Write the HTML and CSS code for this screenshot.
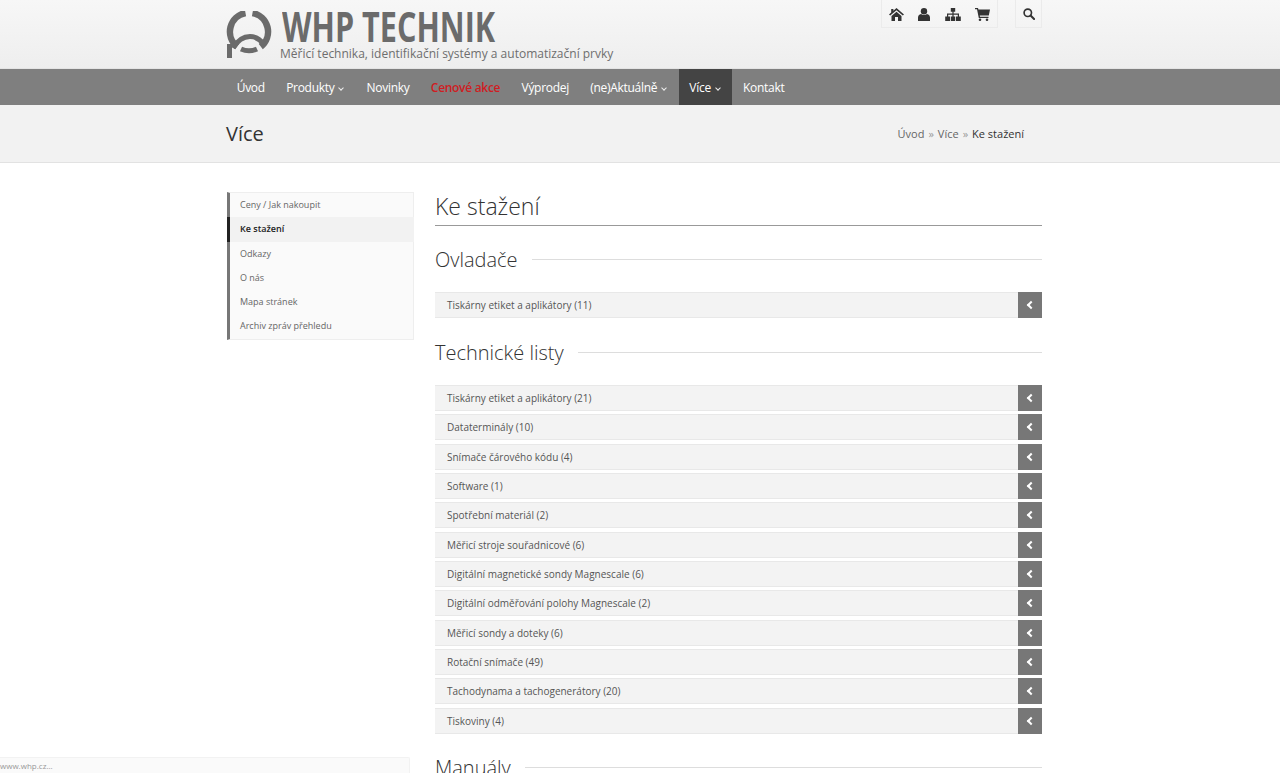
FILE: index.html
```html
<!DOCTYPE html>
<html>
<head>
  <meta charset="UTF-8" />
  <title>Ke stažení - WHP Technik</title>
  <link rel="stylesheet" href="styles.css">
</head>
<body>
  <!-- Header -->
  <header class="top">
    <div class="wrap top-inner">
      <a class="brand" href="#">
        <svg class="logo" viewBox="0 0 46 48" width="46" height="48" fill="none" stroke="#6b6b6b">
          <path d="M19.5 2 A19 19 0 0 0 11.2 35.6" stroke-width="6.5"/>
          <path d="M26.5 2 A19 19 0 0 1 34.8 35.6" stroke-width="6.5"/>
          <path d="M15 38 A19 19 0 0 0 31 38" stroke-width="5"/>
          <path d="M3.5 47 V33" stroke-width="5"/>
          <path d="M7 37 Q14 25.5 24 25.5 Q32 25.5 37.5 33" stroke-width="5"/>
        </svg>
        <span class="brand-text">
          <span class="brand-name">WHP TECHNIK</span>
          <span class="brand-sub">Měřicí technika, identifikační systémy a automatizační prvky</span>
        </span>
      </a>
      <div class="tools">
        <div class="tool-box">
          <a href="#"><svg width="15" height="13" viewBox="0 0 15 13"><path d="M7.5 0 L15 6.5 L13.8 7.6 L7.5 2.3 L1.2 7.6 L0 6.5 L2.2 4.6 V1 H4.4 V2.7 Z M2.5 8 L7.5 3.8 L12.5 8 V13 H9 V9 H6 V13 H2.5 Z" fill="#333"/></svg></a>
          <a href="#"><svg width="12" height="13" viewBox="0 0 12 13"><circle cx="6" cy="3.2" r="3.2" fill="#333"/><path d="M0 13 V9.5 C0 7.5 1.5 6.3 3 6 C4.5 7.2 7.5 7.2 9 6 C10.5 6.3 12 7.5 12 9.5 V13 Z" fill="#333"/></svg></a>
          <a href="#"><svg width="16" height="13" viewBox="0 0 16 13"><path d="M5.8 0 H10.2 V3.8 H8.6 V5.6 H14 V8.6 H15.8 V13 H11 V8.6 H12.8 V6.8 H8.6 V8.6 H10.2 V13 H5.8 V8.6 H7.4 V6.8 H3.2 V8.6 H5 V13 H0.2 V8.6 H2 V5.6 H7.4 V3.8 H5.8 Z" fill="#333"/></svg></a>
          <a href="#"><svg width="15" height="13" viewBox="0 0 15 13"><path d="M0 0 H3 L3.4 1.6 H15 L13.8 7.6 H4.8 L5 8.8 H13.5 V10 H3.8 L2 1.2 H0 Z" fill="#333"/><circle cx="5" cy="11.7" r="1.3" fill="#333"/><circle cx="12" cy="11.7" r="1.3" fill="#333"/></svg></a>
        </div>
        <div class="tool-box tool-search">
          <a href="#"><svg width="12" height="12" viewBox="0 0 13 13"><circle cx="5.2" cy="5.2" r="4" fill="none" stroke="#333" stroke-width="1.8"/><path d="M8.2 8.2 L12 12" stroke="#333" stroke-width="2.2" stroke-linecap="round"/></svg></a>
        </div>
      </div>
    </div>
  </header>

  <!-- Main menu -->
  <nav class="menu">
    <ul class="wrap menu-list">
      <li><a href="#">Úvod</a></li>
      <li><a href="#">Produkty <i class="caret"></i></a></li>
      <li><a href="#">Novinky</a></li>
      <li><a class="sale" href="#">Cenové akce</a></li>
      <li><a href="#">Výprodej</a></li>
      <li><a href="#">(ne)Aktuálně <i class="caret"></i></a></li>
      <li class="active"><a href="#">Více <i class="caret"></i></a></li>
      <li><a href="#">Kontakt</a></li>
    </ul>
  </nav>

  <div class="title-bar">
    <div class="wrap title-inner">
      <h2>Více</h2>
      <div class="crumbs">
        <a href="#">Úvod</a><span class="sep">»</span><a href="#">Více</a><span class="sep">»</span><span class="here">Ke stažení</span>
      </div>
    </div>
  </div>

  <div class="wrap main">
    <!-- Side menu -->
    <ul class="side">
      <li><a href="#">Ceny / Jak nakoupit</a></li>
      <li class="current"><a href="#">Ke stažení</a></li>
      <li><a href="#">Odkazy</a></li>
      <li><a href="#">O nás</a></li>
      <li><a href="#">Mapa stránek</a></li>
      <li><a href="#">Archiv zpráv přehledu</a></li>
    </ul>

    <section class="content">
      <h1>Ke stažení</h1>

      <h3 class="sec sec-first"><span>Ovladače</span></h3>
      <div class="rows">
        <div class="row"><span>Tiskárny etiket a aplikátory (11)</span><button class="toggle"></button></div>
      </div>

      <h3 class="sec"><span>Technické listy</span></h3>
      <div class="rows">
        <div class="row"><span>Tiskárny etiket a aplikátory (21)</span><button class="toggle"></button></div>
        <div class="row"><span>Dataterminály (10)</span><button class="toggle"></button></div>
        <div class="row"><span>Snímače čárového kódu (4)</span><button class="toggle"></button></div>
        <div class="row"><span>Software (1)</span><button class="toggle"></button></div>
        <div class="row"><span>Spotřební materiál (2)</span><button class="toggle"></button></div>
        <div class="row"><span>Měřicí stroje souřadnicové (6)</span><button class="toggle"></button></div>
        <div class="row"><span>Digitální magnetické sondy Magnescale (6)</span><button class="toggle"></button></div>
        <div class="row"><span>Digitální odměřování polohy Magnescale (2)</span><button class="toggle"></button></div>
        <div class="row"><span>Měřicí sondy a doteky (6)</span><button class="toggle"></button></div>
        <div class="row"><span>Rotační snímače (49)</span><button class="toggle"></button></div>
        <div class="row"><span>Tachodynama a tachogenerátory (20)</span><button class="toggle"></button></div>
        <div class="row"><span>Tiskoviny (4)</span><button class="toggle"></button></div>
      </div>

      <h3 class="sec"><span>Manuály</span></h3>
    </section>
  </div>

  <div class="status">www.whp.cz...</div>
</body>
</html>
```
FILE: styles.css
```css
html,
body {
  height: 100%;
  overflow: hidden;
}

body {
  margin: 0;
  font-family: 'Open Sans', sans-serif;
  font-size: 10px;
  color: #555;
  background-color: #fff;
}

a {
  color: inherit;
  text-decoration: none;
}

.wrap {
  width: 816px;
  margin-left: 226px;
}

/* Header */
.top {
  height: 68px;
  background: linear-gradient(#f7f7f7, #eeeeee);
  border-bottom: 1px solid #e4e4e4;
}

.top-inner {
  display: flex;
  justify-content: space-between;
  align-items: flex-start;
}

.brand {
  display: flex;
  padding-top: 11px;
}

.logo {
  display: block;
}

.brand-text {
  display: flex;
  flex-direction: column;
  margin-left: 8px;
}

.brand-name {
  font-size: 40.5px;
  font-weight: 700;
  line-height: 31px;
  color: #6b6b6b;
  margin-left: 2px;
  white-space: nowrap;
  transform: scaleX(0.755);
  transform-origin: left top;
}

.brand-sub {
  font-size: 12px;
  line-height: 16px;
  margin-top: 4px;
  color: #6e6e6e;
  white-space: nowrap;
}

.tools {
  display: flex;
  gap: 17px;
}

.tool-box {
  display: flex;
  align-items: center;
  height: 26px;
  padding: 1px 7px 0;
  gap: 14.3px;
  border: 1px solid #ebebeb;
  border-top: none;
}

.tool-search {
  padding: 1px 6px 0 7px;
}

.tool-box a {
  display: flex;
}

/* Main menu */
.menu {
  height: 36px;
  background-color: #7f7f7f;
}

.menu-list {
  display: flex;
  list-style-type: none;
  padding: 0;
  margin-top: 0;
  margin-bottom: 0;
}

.menu-list a {
  display: block;
  padding: 1px 10.7px 0;
  line-height: 35px;
  font-size: 12px;
  font-weight: 500;
  letter-spacing: -0.3px;
  color: #fff;
  white-space: nowrap;
}

.menu-list .sale {
  color: #d01c22;
  font-weight: 600;
}

.menu-list .active {
  background-color: #444;
}

.caret {
  display: inline-block;
  width: 3px;
  height: 3px;
  margin: 0 2px 2px 2px;
  border-right: 1px solid #eee;
  border-bottom: 1px solid #eee;
  transform: rotate(45deg);
}

/* Title bar */
.title-bar {
  height: 57px;
  background-color: #f2f2f2;
  border-bottom: 1px solid #e2e2e2;
}

.title-inner {
  display: flex;
  justify-content: space-between;
  align-items: center;
  height: 57px;
}

.title-inner h2 {
  margin: 0;
  font-size: 20px;
  font-weight: 400;
  color: #333;
}

.crumbs {
  font-size: 11px;
  color: #666;
  padding-right: 18px;
}

.crumbs .sep {
  margin: 0 4px;
  color: #999;
}

.crumbs .here {
  color: #333;
}

/* Page body */
.main {
  display: flex;
  align-items: flex-start;
  padding-top: 29px;
}

.side {
  width: 187px;
  margin: 0 21px 0 1px;
  padding: 0;
  list-style-type: none;
  background-color: #fafafa;
  border: 1px solid #eee;
  border-left: 3px solid #777;
  box-sizing: border-box;
}

.side li {
  height: 24.3px;
  line-height: 24px;
  padding-left: 10px;
  margin-right: -1px;
  color: #666;
  font-size: 9px;
}

.side .current {
  margin-left: -3px;
  padding-left: 10px;
  background-color: #f2f2f2;
  border-left: 3px solid #222;
  color: #222;
  font-weight: 600;
}

.content {
  flex: 1;
  min-width: 0;
}

.content h1 {
  margin: 0;
  height: 33px;
  font-size: 23px;
  font-weight: 300;
  line-height: 28px;
  color: #333;
  border-bottom: 1px solid #999;
}

.sec {
  display: flex;
  align-items: center;
  margin: 18px 0 17px;
  height: 32px;
  font-size: 20px;
  font-weight: 300;
  color: #333;
}

.sec-first {
  margin-top: 17px;
}

.sec::after {
  content: "";
  flex: 1;
  margin-left: 14px;
  border-top: 1px solid #ddd;
}

.rows {
  display: flex;
  flex-direction: column;
  gap: 3.33px;
}

.row {
  display: flex;
  justify-content: space-between;
  align-items: center;
  height: 26px;
  padding-left: 12px;
  font-size: 10px;
  color: #555;
  background-color: #f3f3f3;
  border-top: 1px solid #e8e8e8;
  border-bottom: 1px solid #e8e8e8;
  box-sizing: border-box;
}

.toggle {
  position: relative;
  width: 24px;
  height: 26px;
  padding: 0;
  border: none;
  background-color: #777;
}

.toggle::before {
  content: "";
  position: absolute;
  left: 10px;
  top: 10px;
  width: 4px;
  height: 4px;
  border-left: 2px solid #fff;
  border-bottom: 2px solid #fff;
  transform: rotate(45deg);
}

.status {
  position: fixed;
  left: 0;
  bottom: 0;
  width: 409px;
  height: 15px;
  line-height: 16px;
  font-size: 8px;
  color: #999;
  background-color: #fafafa;
  border: 1px solid #f2f2f2;
  border-left: none;
  border-bottom: none;
  border-radius: 0 2px 0 0;
}
```
